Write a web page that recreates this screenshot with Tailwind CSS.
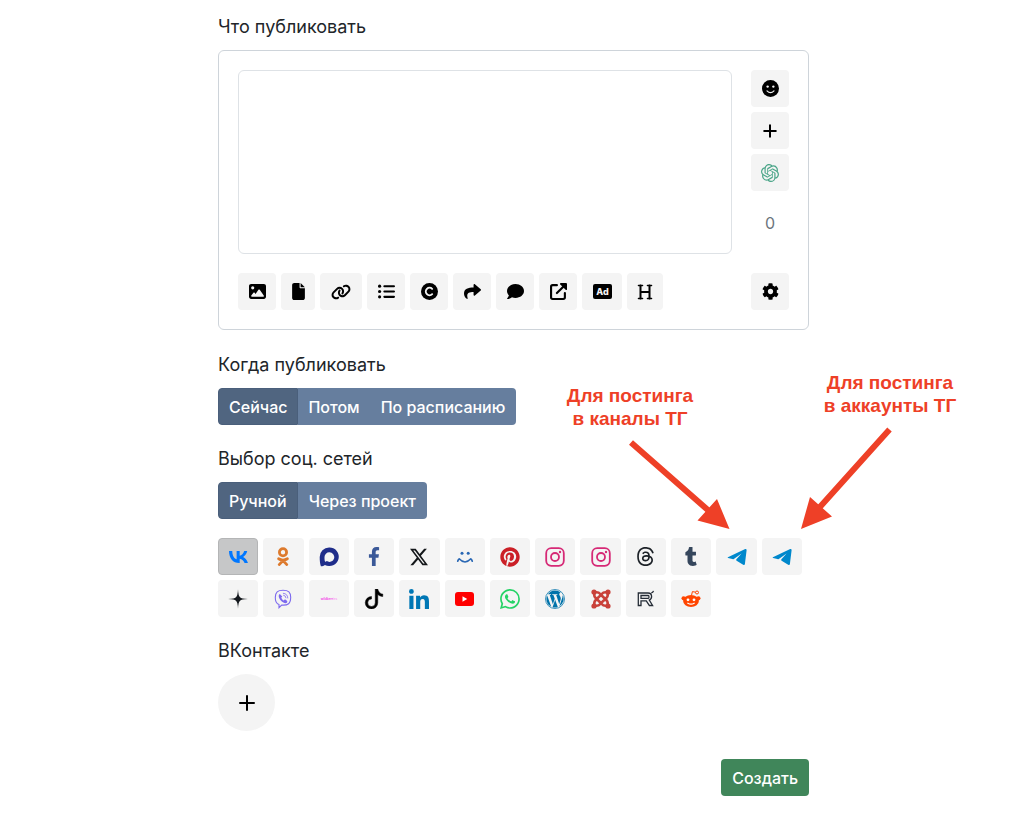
<!DOCTYPE html>
<html lang="ru">
<head>
    <meta charset="UTF-8">
    <meta name="viewport" content="width=device-width, initial-scale=1.0">
    <title>Новый пост</title>
    <script src="https://cdn.jsdelivr.net/npm/@tailwindcss/browser@4"></script>
</head>
<body class="bg-white font-['Inter',sans-serif] text-base text-[#212529]">
    <main class="relative mx-auto max-w-[594px] pt-[13px] pl-[3px]">
        <h2 class="text-lg leading-[27px] mb-[10px]"><label for="post-text">Что публиковать</label></h2>
        <section class="border border-[#ced4da] rounded-md p-[19px]">
            <div class="flex gap-[19px]">
                <textarea id="post-text" class="block flex-1 min-w-0 h-[184px] border border-[#dee2e6] rounded-md p-2 resize-none"></textarea>
                <div class="flex flex-col gap-[5px] w-[38px]">
                    <button aria-label="Эмодзи" class="flex items-center justify-center h-[37px] rounded bg-[#f4f4f4]">
                        <svg class="size-[17px]" viewBox="0 0 16 16"><circle cx="8" cy="8" r="8"/><circle cx="5.3" cy="6.2" r="1.1" fill="#f4f4f4"/><circle cx="10.7" cy="6.2" r="1.1" fill="#f4f4f4"/><path d="M4.7 10.2Q8 13.6 11.3 10.2" fill="none" stroke="#f4f4f4" stroke-width="1.1" stroke-linecap="round"/></svg>
                    </button>
                    <button aria-label="Добавить" class="flex items-center justify-center h-[37px] rounded bg-[#f4f4f4]">
                        <svg class="size-4" viewBox="0 0 16 16" fill="none" stroke="#000" stroke-width="2" stroke-linecap="round"><path d="M8 2.2v11.6M2.2 8h11.6"/></svg>
                    </button>
                    <button aria-label="ChatGPT" class="flex items-center justify-center h-[37px] rounded bg-[#f4f4f4]">
                        <svg class="size-[18px]" viewBox="0 0 24 24" fill="#4aa588"><path d="M22.2819 9.8211a5.9847 5.9847 0 0 0-.5157-4.9108 6.0462 6.0462 0 0 0-6.5098-2.9A6.0651 6.0651 0 0 0 4.9807 4.1818a5.9847 5.9847 0 0 0-3.9977 2.9 6.0462 6.0462 0 0 0 .7427 7.0966 5.98 5.98 0 0 0 .511 4.9107 6.051 6.051 0 0 0 6.5146 2.9001A5.9847 5.9847 0 0 0 13.2599 24a6.0557 6.0557 0 0 0 5.7718-4.2058 5.9894 5.9894 0 0 0 3.9977-2.9001 6.0557 6.0557 0 0 0-.7475-7.0729zm-9.022 12.6081a4.4755 4.4755 0 0 1-2.8764-1.0408l.1419-.0804 4.7783-2.7582a.7948.7948 0 0 0 .3927-.6813v-6.7369l2.02 1.1686a.071.071 0 0 1 .038.052v5.5826a4.504 4.504 0 0 1-4.4945 4.4944zm-9.6607-4.1254a4.4708 4.4708 0 0 1-.5346-3.0137l.142.0852 4.783 2.7582a.7712.7712 0 0 0 .7806 0l5.8428-3.3685v2.3324a.0804.0804 0 0 1-.0332.0615L9.74 19.9502a4.4992 4.4992 0 0 1-6.1408-1.6464zM2.3408 7.8956a4.485 4.485 0 0 1 2.3655-1.9728V11.6a.7664.7664 0 0 0 .3879.6765l5.8144 3.3543-2.0201 1.1685a.0757.0757 0 0 1-.071 0l-4.8303-2.7865A4.504 4.504 0 0 1 2.3408 7.872zm16.5963 3.8558L13.1038 8.364 15.1192 7.2a.0757.0757 0 0 1 .071 0l4.8303 2.7913a4.4944 4.4944 0 0 1-.6765 8.1042v-5.6772a.79.79 0 0 0-.407-.667zm2.0107-3.0231l-.142-.0852-4.7735-2.7818a.7759.7759 0 0 0-.7854 0L9.409 9.2297V6.8974a.0662.0662 0 0 1 .0284-.0615l4.8303-2.7866a4.4992 4.4992 0 0 1 6.6802 4.66zM8.3065 12.863l-2.02-1.1638a.0804.0804 0 0 1-.038-.0567V6.0742a4.4992 4.4992 0 0 1 7.3757-3.4537l-.142.0805L8.704 5.459a.7948.7948 0 0 0-.3927.6813zm1.0976-2.3654l2.602-1.4998 2.6069 1.4998v2.9994l-2.5974 1.4997-2.6067-1.4997Z"/></svg>
                    </button>
                    <span class="mt-[15px] text-center leading-6 text-[#6c757d]">0</span>
                </div>
            </div>
            <div class="mt-[19px] flex gap-[5px]">
                <button aria-label="Изображение" class="flex items-center justify-center w-[38px] h-[37px] rounded bg-[#f4f4f4]">
                    <svg class="size-[17px]" viewBox="0 0 512 512"><path d="M0 96C0 60.7 28.7 32 64 32H448c35.3 0 64 28.7 64 64V416c0 35.3-28.7 64-64 64H64c-35.3 0-64-28.7-64-64V96zM323.8 202.5c-4.5-6.6-11.9-10.5-19.8-10.5s-15.4 3.9-19.8 10.5l-87 127.6L170.7 297c-4.6-5.7-11.5-9-18.7-9s-14.2 3.3-18.7 9l-64 80c-5.8 7.2-6.9 17.1-2.9 25.4s12.4 13.6 21.6 13.6h96 32H424c8.9 0 17.1-4.9 21.2-12.8s3.6-17.4-1.4-24.7l-120-176zM112 192a48 48 0 1 0 0-96 48 48 0 1 0 0 96z"/></svg>
                </button>
                <button aria-label="Файл" class="flex items-center justify-center w-[34px] h-[37px] rounded bg-[#f4f4f4]">
                    <svg class="w-[13px] h-[17px]" viewBox="0 0 384 512"><path d="M0 64C0 28.7 28.7 0 64 0H224V128c0 17.7 14.3 32 32 32H384V448c0 35.3-28.7 64-64 64H64c-35.3 0-64-28.7-64-64V64zm384 64H256V0L384 128z"/></svg>
                </button>
                <button aria-label="Ссылка" class="flex items-center justify-center w-[42px] h-[37px] rounded bg-[#f4f4f4]">
                    <svg class="w-5 h-4" viewBox="0 0 640 512"><path d="M579.8 267.7c56.5-56.5 56.5-148 0-204.5c-50-50-128.8-56.5-186.3-15.4l-1.6 1.1c-14.4 10.3-17.7 30.3-7.4 44.6s30.3 17.7 44.6 7.4l1.6-1.1c32.1-22.9 76-19.3 103.8 8.6c31.5 31.5 31.5 82.5 0 114L422.3 334.8c-31.5 31.5-82.5 31.5-114 0c-27.9-27.9-31.5-71.8-8.6-103.8l1.1-1.6c10.3-14.4 6.9-34.4-7.4-44.6s-34.4-6.9-44.6 7.4l-1.1 1.6C206.5 251.2 213 330 263 380c56.5 56.5 148 56.5 204.5 0L579.8 267.7zM60.2 244.3c-56.5 56.5-56.5 148 0 204.5c50 50 128.8 56.5 186.3 15.4l1.6-1.1c14.4-10.3 17.7-30.3 7.4-44.6s-30.3-17.7-44.6-7.4l-1.6 1.1c-32.1 22.9-76 19.3-103.8-8.6C74 372 74 321 105.5 289.5L217.7 177.2c31.5-31.5 82.5-31.5 114 0c27.9 27.9 31.5 71.8 8.6 103.9l-1.1 1.6c-10.3 14.4-6.9 34.4 7.4 44.6s34.4 6.9 44.6-7.4l1.1-1.6C433.5 260.8 427 182 377 132c-56.5-56.5-148-56.5-204.5 0L60.2 244.3z"/></svg>
                </button>
                <button aria-label="Список" class="flex items-center justify-center w-[38px] h-[37px] rounded bg-[#f4f4f4]">
                    <svg class="size-[17px]" viewBox="0 0 16 16"><circle cx="1.5" cy="3" r="1.5"/><circle cx="1.5" cy="8" r="1.5"/><circle cx="1.5" cy="13" r="1.5"/><path d="M6 3h9M6 8h9M6 13h9" stroke="#000" stroke-width="2" stroke-linecap="round"/></svg>
                </button>
                <button aria-label="Копирайт" class="flex items-center justify-center w-[38px] h-[37px] rounded bg-[#f4f4f4]">
                    <svg class="size-[17px]" viewBox="0 0 16 16"><circle cx="8" cy="8" r="8"/><path d="M10.5 10.5a3.5 3.5 0 1 1 0-5" fill="none" stroke="#f4f4f4" stroke-width="1.8" stroke-linecap="round"/></svg>
                </button>
                <button aria-label="Репост" class="flex items-center justify-center w-[38px] h-[37px] rounded bg-[#f4f4f4]">
                    <svg class="size-[17px]" viewBox="0 0 512 512"><path d="M503.691 189.836L327.687 37.851C312.281 24.546 288 35.347 288 56.015v80.053C127.371 137.907 0 170.1 0 322.326c0 61.441 39.581 122.309 83.333 154.132 13.653 9.931 33.111-2.533 28.077-18.631C66.066 312.814 132.917 274.316 288 272.085V360c0 20.7 24.3 31.453 39.687 18.164l176.004-152c11.071-9.562 11.086-26.753 0-36.328z"/></svg>
                </button>
                <button aria-label="Комментарий" class="flex items-center justify-center w-[38px] h-[37px] rounded bg-[#f4f4f4]">
                    <svg class="size-[17px]" viewBox="0 0 512 512"><path d="M256 32C114.6 32 0 125.1 0 240c0 49.6 21.4 95 57 130.7C44.5 421.1 2.7 466 2.2 466.5c-2.2 2.3-2.8 5.7-1.5 8.7S4.8 480 8 480c66.3 0 116-31.8 140.6-51.4 32.7 12.3 69 19.4 107.4 19.4 141.4 0 256-93.1 256-208S397.4 32 256 32z"/></svg>
                </button>
                <button aria-label="Внешняя ссылка" class="flex items-center justify-center w-[38px] h-[37px] rounded bg-[#f4f4f4]">
                    <svg class="size-[17px]" viewBox="0 0 16 16"><path d="M6.5 2H2.5Q1 2 1 3.5V13.5Q1 15 2.5 15H12.5Q14 15 14 13.5V9.5" fill="none" stroke="#000" stroke-width="2" stroke-linecap="round"/><path d="M6.5 9.5 13 3" stroke="#000" stroke-width="2" stroke-linecap="round"/><path d="M10 0h5q1 0 1 1v5q-.5 1-1.3.3L9.7 1.3Q9 .5 10 0z"/></svg>
                </button>
                <button aria-label="Реклама" class="flex items-center justify-center w-[40px] h-[37px] rounded bg-[#f4f4f4]">
                    <svg class="w-[19px] h-[15px]" viewBox="0 0 19 15"><rect width="19" height="15" rx="2"/><text x="9.5" y="11" text-anchor="middle" font-family="Inter, sans-serif" font-weight="800" font-size="9" fill="#f4f4f4">Ad</text></svg>
                </button>
                <button aria-label="Заголовок" class="flex items-center justify-center w-[36px] h-[37px] rounded bg-[#f4f4f4]">
                    <svg class="size-4" viewBox="0 0 16 16" fill="none" stroke="#000" stroke-linecap="round"><path d="M1.5 1.5h4M10.5 1.5h4M1.5 14.5h4M10.5 14.5h4" stroke-width="1.6"/><path d="M3.5 1.5v13M12.5 1.5v13M3.5 8h9" stroke-width="2"/></svg>
                </button>
                <button aria-label="Настройки" class="ml-auto flex items-center justify-center w-[38px] h-[37px] rounded bg-[#f4f4f4]">
                    <svg class="size-[17px]" viewBox="0 0 512 512"><path d="M487.4 315.7l-42.6-24.6c4.3-23.2 4.3-47 0-70.2l42.6-24.6c4.9-2.8 7.1-8.6 5.5-14-11.1-35.6-30-67.8-54.7-94.6-3.8-4.1-10-5.1-14.8-2.3L380.8 110c-17.9-15.4-38.5-27.3-60.8-35.1V25.8c0-5.6-3.9-10.5-9.4-11.7-36.7-8.2-74.3-7.8-109.2 0-5.5 1.2-9.4 6.1-9.4 11.7V75c-22.2 7.9-42.8 19.8-60.8 35.1L88.7 85.5c-4.9-2.8-11-1.9-14.8 2.3-24.7 26.7-43.6 58.9-54.7 94.6-1.7 5.4.6 11.2 5.5 14L67.3 221c-4.3 23.2-4.3 47 0 70.2l-42.6 24.6c-4.9 2.8-7.1 8.6-5.5 14 11.1 35.6 30 67.8 54.7 94.6 3.8 4.1 10 5.1 14.8 2.3l42.6-24.6c17.9 15.4 38.5 27.3 60.8 35.1v49.2c0 5.6 3.9 10.5 9.4 11.7 36.7 8.2 74.3 7.8 109.2 0 5.5-1.2 9.4-6.1 9.4-11.7v-49.2c22.2-7.9 42.8-19.8 60.8-35.1l42.6 24.6c4.9 2.8 11 1.9 14.8-2.3 24.7-26.7 43.6-58.9 54.7-94.6 1.5-5.5-.7-11.3-5.6-14.1zM256 336c-44.1 0-80-35.9-80-80s35.9-80 80-80 80 35.9 80 80-35.9 80-80 80z"/></svg>
                </button>
            </div>
        </section>

        <h2 class="text-lg leading-[27px] mt-[21px] mb-[10px]">Когда публиковать</h2>
        <div class="flex font-medium text-white">
            <button aria-pressed="true" class="h-[37px] px-[10px] rounded-l border border-[#4a5f7b] bg-[#506580]">Сейчас</button>
            <button aria-pressed="false" class="h-[37px] px-[10px] bg-[#667e9e]">Потом</button>
            <button aria-pressed="false" class="h-[37px] px-[11px] rounded-r bg-[#667e9e]">По расписанию</button>
        </div>

        <h2 class="text-lg leading-[27px] mt-5 mb-[10px]">Выбор соц. сетей</h2>
        <div class="flex font-medium text-white">
            <button aria-pressed="true" class="h-[37px] px-[10px] rounded-l border border-[#4a5f7b] bg-[#506580]">Ручной</button>
            <button aria-pressed="false" class="h-[37px] px-[11px] rounded-r bg-[#667e9e]">Через проект</button>
        </div>

        <div class="mt-[19px] grid grid-cols-13 gap-[5px] max-w-[584px]">
            <button aria-label="ВКонтакте" aria-pressed="true" class="flex items-center justify-center h-[37px] rounded border border-[#b4b5b6] bg-[#c6c7c8]">
                <svg class="w-[19px] h-3" viewBox="4.05 7.3 16.06 9.99" preserveAspectRatio="none" fill="#0077ff"><path d="M12.77 17.29c-5.47 0-8.59-3.75-8.72-9.99h2.74c.09 4.58 2.11 6.52 3.71 6.92V7.3h2.58v3.95c1.58-.17 3.24-1.97 3.8-3.95h2.58c-.43 2.44-2.23 4.24-3.51 4.98 1.28.6 3.33 2.17 4.11 5.01h-2.84c-.61-1.9-2.13-3.37-4.14-3.57v3.57z"/></svg>
            </button>
            <button aria-label="Одноклассники" class="flex items-center justify-center h-[37px] rounded bg-[#f4f4f4]">
                <svg class="size-5" viewBox="0 0 20 20" fill="none" stroke="#dd7a2d" stroke-width="2.8" stroke-linecap="round"><circle cx="10" cy="5.2" r="3.6"/><path d="M5.6 11.8q4.4 2.8 8.8 0M10 13.6l-3.8 4M10 13.6l3.8 4"/></svg>
            </button>
            <button aria-label="MAX" class="flex items-center justify-center h-[37px] rounded bg-[#f4f4f4]">
                <svg class="size-5" viewBox="0 0 20 20"><path fill="#1f2d8a" fill-rule="evenodd" d="M10.2.5a9.3 9.3 0 1 1-4.3 17.4C5 18.7 3.5 19.3 1.9 19.3 1 17 .7 13 .7 10A9.4 9.4 0 0 1 10.2.5zM10.3 5.3a4.8 4.8 0 0 0-4.8 4.7c0 1.8 0 3.5.6 4.8.7 0 1.2-.3 1.7-.7a4.8 4.8 0 1 0 2.5-8.8z"/></svg>
            </button>
            <button aria-label="Facebook" class="flex items-center justify-center h-[37px] rounded bg-[#f4f4f4]">
                <svg class="w-3 h-[19px]" viewBox="0 0 320 512" fill="#3b5998"><path d="M279.14 288l14.22-92.66h-88.91v-60.13c0-25.35 12.42-50.06 52.24-50.06h40.42V6.26S260.43 0 225.36 0c-73.22 0-121.08 44.38-121.08 124.72v70.62H22.89V288h81.39v224h100.17V288z"/></svg>
            </button>
            <button aria-label="X" class="flex items-center justify-center h-[37px] rounded bg-[#f4f4f4]">
                <svg class="size-[18px]" viewBox="0 0 24 24" fill="#14171a"><path d="M18.901 1.153h3.68l-8.04 9.19L24 22.846h-7.406l-5.8-7.584-6.638 7.584H.474l8.6-9.83L0 1.154h7.594l5.243 6.932ZM17.61 20.644h2.039L6.486 3.24H4.298Z"/></svg>
            </button>
            <button aria-label="Мой Мир" class="flex items-center justify-center h-[37px] rounded bg-[#f4f4f4]">
                <svg class="size-5" viewBox="0 0 20 20"><circle cx="7" cy="6.3" r="1.5" fill="#2967b4"/><circle cx="13.2" cy="6.3" r="1.5" fill="#2967b4"/><path d="M2.7 14.2q.3-1.3 1.5-2.4 5.8 6.4 11.6 0 1.2 1.1 1.5 2.4" fill="none" stroke="#2967b4" stroke-width="1.6" stroke-linecap="round" stroke-linejoin="round"/></svg>
            </button>
            <button aria-label="Pinterest" class="flex items-center justify-center h-[37px] rounded bg-[#f4f4f4]">
                <svg class="size-5" viewBox="0 0 496 512" fill="#cb2027"><path d="M496 256c0 137-111 248-248 248-25.6 0-50.2-3.9-73.4-11.1 10.1-16.5 25.2-43.5 30.8-65 3-11.6 15.4-59 15.4-59 8.1 15.4 31.7 28.5 56.8 28.5 74.8 0 128.7-68.8 128.7-154.3 0-81.9-66.9-143.2-152.9-143.2-107 0-163.9 71.8-163.9 150.1 0 36.4 19.4 81.7 50.3 96.1 4.7 2.2 7.2 1.2 8.3-3.3.8-3.4 5-20.3 6.9-28.1.6-2.5.3-4.7-1.7-7.1-10.1-12.5-18.3-35.3-18.3-56.6 0-54.7 41.4-107.6 112-107.6 60.9 0 103.6 41.5 103.6 100.9 0 67.1-33.9 113.6-78 113.6-24.3 0-42.6-20.1-36.7-44.8 7-29.5 20.5-61.3 20.5-82.6 0-19-10.2-34.9-31.4-34.9-24.9 0-44.9 25.7-44.9 60.2 0 22 7.4 36.8 7.4 36.8s-24.5 103.8-29 123.2c-5 21.4-3 51.6-.9 71.2C65.4 450.9 0 361.1 0 256 0 119 111 8 248 8s248 111 248 248z"/></svg>
            </button>
            <button aria-label="Instagram" class="flex items-center justify-center h-[37px] rounded bg-[#f4f4f4]">
                <svg class="size-5" viewBox="0 0 20 20" fill="none" stroke="#d62976" stroke-width="1.8"><rect x="1.2" y="1.2" width="17.6" height="17.6" rx="5"/><circle cx="10" cy="10" r="4"/><circle cx="15" cy="5" r="1.2" fill="#d62976" stroke="none"/></svg>
            </button>
            <button aria-label="Instagram Business" class="flex items-center justify-center h-[37px] rounded bg-[#f4f4f4]">
                <svg class="size-5" viewBox="0 0 20 20" fill="none" stroke="#d62976" stroke-width="1.8"><rect x="1.2" y="1.2" width="17.6" height="17.6" rx="5"/><circle cx="10" cy="10" r="4"/><circle cx="15" cy="5" r="1.2" fill="#d62976" stroke="none"/></svg>
            </button>
            <button aria-label="Threads" class="flex items-center justify-center h-[37px] rounded bg-[#f4f4f4]">
                <svg class="size-[19px]" viewBox="0 0 16 16" fill="#1c2127"><path d="M6.321 6.016c-.27-.18-1.166-.802-1.166-.802.756-1.081 1.753-1.502 3.132-1.502.975 0 1.803.327 2.394.948s.928 1.509 1.005 2.644q.492.207.905.484c1.109.745 1.719 1.86 1.719 3.137 0 2.716-2.226 5.075-6.256 5.075C4.594 16 1 13.987 1 7.994 1 2.034 4.482 0 8.044 0 9.69 0 13.55.243 15 5.036l-1.36.353C12.516 1.974 10.163 1.43 8.006 1.43c-3.565 0-5.582 2.171-5.582 6.79 0 4.143 2.254 6.343 5.63 6.343 2.777 0 4.847-1.443 4.847-3.556 0-1.438-1.208-2.127-1.27-2.127-.236 1.234-.868 3.31-3.644 3.31-1.618 0-3.013-1.118-3.013-2.582 0-2.09 1.984-2.847 3.55-2.847.586 0 1.294.04 1.663.114 0-.637-.54-1.728-1.9-1.728-1.25 0-1.566.405-1.967.868ZM8.716 8.19c-2.04 0-2.304.87-2.304 1.416 0 .878 1.043 1.168 1.6 1.168 1.02 0 2.067-.282 2.232-2.423a6.2 6.2 0 0 0-1.528-.161"/></svg>
            </button>
            <button aria-label="Tumblr" class="flex items-center justify-center h-[37px] rounded bg-[#f4f4f4]">
                <svg class="w-3 h-[19px]" viewBox="0 0 320 512" fill="#35465c"><path d="M309.8 480.3c-13.6 14.5-50 31.7-97.4 31.7-120.8 0-147-88.8-147-140.6v-144H17.9c-5.5 0-10-4.5-10-10v-68c0-7.2 4.5-13.6 11.3-16 62-21.8 81.5-76 84.3-117.1.8-11 6.5-16.3 16.1-16.3h70.9c5.5 0 10 4.5 10 10v115.2h83c5.5 0 10 4.4 10 9.9v81.7c0 5.5-4.5 10-10 10h-83.4V360c0 34.2 23.7 53.6 68 35.8 4.8-1.9 9-3.2 12.7-2.2 3.5.9 5.8 3.4 7.4 7.9l22 64.3c1.8 5 3.3 10.6-.4 14.5z"/></svg>
            </button>
            <button aria-label="Telegram каналы" class="flex items-center justify-center h-[37px] rounded bg-[#f4f4f4]">
                <svg class="size-5" viewBox="0 0 20 20" fill="#0088cc"><path d="M.9 10.2 18.2 2.1q1.5-.3 1.4 1.1L17.9 17q-.3 1.7-1.7.8L9.6 13.7q-.9-.7-.2-1.5L14.6 6.5 6.8 12q-.7.4-1.5.1L1.1 11Q.2 10.6.9 10.2z"/></svg>
            </button>
            <button aria-label="Telegram аккаунты" class="flex items-center justify-center h-[37px] rounded bg-[#f4f4f4]">
                <svg class="size-5" viewBox="0 0 20 20" fill="#0088cc"><path d="M.9 10.2 18.2 2.1q1.5-.3 1.4 1.1L17.9 17q-.3 1.7-1.7.8L9.6 13.7q-.9-.7-.2-1.5L14.6 6.5 6.8 12q-.7.4-1.5.1L1.1 11Q.2 10.6.9 10.2z"/></svg>
            </button>
            <button aria-label="Дзен" class="flex items-center justify-center h-[37px] rounded bg-[#f4f4f4]">
                <svg class="size-5" viewBox="0 0 20 20" fill="#14181d"><path d="M10 .2q.3 6.8 2.1 8 1.2 1.5 7.8 1.8-6.6.3-7.8 1.8-1.8 1.2-2.1 8-.3-6.8-2.1-8Q6.7 10.3.1 10 6.7 9.700 7.900 8.200 9.700 7 10 .2z"/></svg>
            </button>
            <button aria-label="Viber" class="flex items-center justify-center h-[37px] rounded bg-[#f4f4f4]">
                <svg class="size-5" viewBox="0 0 20 20" fill="none" stroke="#7c69ee" stroke-linecap="round"><path d="M10 1.3c-5.5 0-7.5 1.8-7.7 7-.1 4.1.7 6.3 3.7 7.3v3.1l2.7-2.6c6.5.4 8.9-1.5 9-7.8C17.7 3.1 15.5 1.3 10 1.3z" stroke-width="1.1"/><path d="M6.8 4.9c-3 1.5.6 8 5.3 9.3 2.1.2 2.7-1.9 1.9-2.5l-2-1.4-1.3 1.1c-1.1-.5-2.2-1.8-2.4-2.9l1-1.1z" fill="#7c69ee" stroke="none"/><path d="M10.3 4.3q4.3.3 4.5 4.7M10.6 6.2q2.2.3 2.4 2.6" stroke-width=".8"/></svg>
            </button>
            <button aria-label="Wildberries" class="flex items-center justify-center h-[37px] rounded bg-[#f4f4f4]">
                <svg class="w-6 h-3" viewBox="0 0 24 12"><text x="12" y="7" text-anchor="middle" font-family="Inter, sans-serif" font-weight="700" font-size="3" fill="#f34fe8">wildberr<tspan fill="#f9a8f3">ies</tspan></text></svg>
            </button>
            <button aria-label="TikTok" class="flex items-center justify-center h-[37px] rounded bg-[#f4f4f4]">
                <svg class="size-5" viewBox="0 0 16 16" stroke="#000" stroke-width=".4"><path d="M9 0h1.98c.144.715.54 1.617 1.235 2.512C12.895 3.389 13.797 4 15 4v2c-1.753 0-3.07-.814-4-1.829V11a5 5 0 1 1-5-5v2a3 3 0 1 0 3 3z"/></svg>
            </button>
            <button aria-label="LinkedIn" class="flex items-center justify-center h-[37px] rounded bg-[#f4f4f4]">
                <svg class="size-5" viewBox="0 0 448 448" fill="#0077b5"><path d="M100.28 448H7.4V148.9h92.88zM53.79 108.1C24.09 108.1 0 83.5 0 53.8a53.79 53.79 0 0 1 107.58 0c0 29.7-24.1 54.3-53.79 54.3zM447.9 448h-92.68V302.4c0-34.7-.7-79.2-48.29-79.2-48.29 0-55.69 37.7-55.69 76.7V448h-92.78V148.9h89.08v40.8h1.3c12.4-23.5 42.69-48.3 87.88-48.3 94 0 111.28 61.9 111.28 142.3V448z"/></svg>
            </button>
            <button aria-label="YouTube" class="flex items-center justify-center h-[37px] rounded bg-[#f4f4f4]">
                <svg class="w-[19px] h-[14px]" viewBox="0 0 19 14"><rect width="19" height="14" rx="3" fill="#f00"/><path d="M7.5 4.2 12.2 7 7.5 9.8z" fill="#fff"/></svg>
            </button>
            <button aria-label="WhatsApp" class="flex items-center justify-center h-[37px] rounded bg-[#f4f4f4]">
                <svg class="size-5" viewBox="0 0 16 16" fill="#25d366"><path d="M13.601 2.326A7.85 7.85 0 0 0 7.994 0C3.627 0 .068 3.558.064 7.926c0 1.399.366 2.76 1.057 3.965L0 16l4.204-1.102a7.9 7.9 0 0 0 3.79.965h.004c4.368 0 7.926-3.558 7.93-7.93A7.9 7.9 0 0 0 13.6 2.326zM7.994 14.521a6.6 6.6 0 0 1-3.356-.92l-.24-.144-2.494.654.666-2.433-.156-.251a6.56 6.56 0 0 1-1.007-3.505c0-3.626 2.957-6.584 6.591-6.584a6.56 6.56 0 0 1 4.66 1.931 6.56 6.56 0 0 1 1.928 4.66c-.004 3.639-2.961 6.592-6.592 6.592m3.615-4.934c-.197-.099-1.17-.578-1.353-.646-.182-.065-.315-.099-.445.099-.133.197-.513.646-.627.775-.114.133-.232.148-.43.05-.197-.1-.836-.308-1.592-.985-.59-.525-.985-1.175-1.103-1.372-.114-.198-.011-.304.088-.403.087-.088.197-.232.296-.346.1-.114.133-.198.198-.33.065-.134.034-.248-.015-.347-.05-.099-.445-1.076-.612-1.47-.16-.389-.323-.335-.445-.34-.114-.007-.247-.007-.38-.007a.73.73 0 0 0-.529.247c-.182.198-.691.677-.691 1.654s.71 1.916.81 2.049c.098.133 1.394 2.132 3.383 2.992.47.205.84.326 1.129.418.475.152.904.129 1.246.08.38-.058 1.171-.48 1.338-.943.164-.464.164-.86.114-.943-.049-.084-.182-.133-.38-.232"/></svg>
            </button>
            <button aria-label="WordPress" class="flex items-center justify-center h-[37px] rounded bg-[#f4f4f4]">
                <svg class="size-5" viewBox="0 0 16 16" fill="#0073aa"><path d="M12.633 7.653c0-.848-.305-1.435-.566-1.892l-.08-.13c-.317-.51-.594-.958-.594-1.48 0-.63.478-1.218 1.152-1.218q.03 0 .058.003l.031.003A6.84 6.84 0 0 0 8 1.137 6.86 6.86 0 0 0 2.266 4.23c.16.005.313.009.442.009.717 0 1.828-.087 1.828-.087.37-.022.414.521.044.565 0 0-.371.044-.785.065l2.5 7.434 1.5-4.506-1.07-2.929c-.369-.022-.719-.065-.719-.065-.37-.022-.326-.588.043-.566 0 0 1.134.087 1.808.087.718 0 1.83-.087 1.83-.087.37-.022.413.522.043.566 0 0-.372.043-.785.065l2.48 7.377.684-2.287.054-.173c.27-.86.469-1.495.469-2.046zM1.137 8a6.86 6.86 0 0 0 3.868 6.176L1.73 5.206A6.8 6.8 0 0 0 1.137 8"/><path d="M6.061 14.583 8.121 8.6l2.109 5.78q.02.05.049.094a6.85 6.85 0 0 1-4.218.109m7.96-9.876q.046.328.047.706c0 .696-.13 1.479-.522 2.458l-2.096 6.06a6.86 6.86 0 0 0 2.572-9.224z"/><circle cx="8" cy="8" r="7.6" fill="none" stroke="#0073aa" stroke-width=".6"/></svg>
            </button>
            <button aria-label="Joomla" class="flex items-center justify-center h-[37px] rounded bg-[#f4f4f4]">
                <svg class="size-5" viewBox="0 0 20 20" fill="none" stroke="#c9413a" stroke-width="2.6"><g fill="#c9413a" stroke="none"><circle cx="3" cy="3" r="2.6"/><circle cx="17" cy="3" r="2.6"/><circle cx="3" cy="17" r="2.6"/><circle cx="17" cy="17" r="2.6"/></g><path d="M3.4 4Q2.7 7.3 5 9.3l3.3 3.2M16 3.4q-3.3-.7-5.3 1.6L7.5 8.3M16.6 16q.7-3.3-1.6-5.3l-3.3-3.2M4 16.6q3.3.7 5.3-1.6l3.2-3.3M4 3.4q3.3-.7 5.3 1.6l2.4 2.5M16.6 4q.7 3.3-1.6 5.3l-2.5 2.4M16 16.6q-3.3.7-5.3-1.6l-2.4-2.5M3.4 16q-.7-3.3 1.6-5.3l2.5-2.4"/></svg>
            </button>
            <button aria-label="Rutube" class="flex items-center justify-center h-[37px] rounded bg-[#f4f4f4]">
                <svg class="size-5" viewBox="0 0 20 20" fill="none" stroke="#252c36" stroke-width="1.3"><path d="M2.3 16.5V4h9.7q3.6 0 3.6 3.6 0 2.6-2.3 3.4l3.3 5.5h-3.2L10.3 11.8H5v4.7zM5 6.5v2.8h7.2q.8 0 .8-1.4t-.8-1.4z"/><path d="M15.2 3.8q1.8.1 2.3-1.9"/></svg>
            </button>
            <button aria-label="Reddit" class="flex items-center justify-center h-[37px] rounded bg-[#f4f4f4]">
                <svg class="size-5" viewBox="0 0 20 20"><g fill="#ff4500"><ellipse cx="10" cy="12" rx="7.9" ry="6"/><circle cx="2.6" cy="9.3" r="2.1"/><circle cx="17.4" cy="9.3" r="2.1"/></g><path d="M10.5 6.5 11.4 2.6 14.5 3.2" fill="none" stroke="#ff4500" stroke-width="1"/><circle cx="16" cy="3.5" r="1.5" fill="none" stroke="#ff4500"/><circle cx="7" cy="10.8" r="1.4" fill="#fff"/><circle cx="13" cy="10.8" r="1.4" fill="#fff"/><path d="M6.8 14.2q3.2 2 6.4 0" fill="none" stroke="#fff" stroke-width="1.2" stroke-linecap="round"/></svg>
            </button>
        </div>

        <h2 class="text-lg leading-[27px] mt-5 mb-[10px]">ВКонтакте</h2>
        <button aria-label="Добавить аккаунт" class="flex items-center justify-center size-[57px] rounded-full bg-[#f4f4f4]">
            <svg class="size-4" viewBox="0 0 16 16" fill="none" stroke="#000" stroke-width="2" stroke-linecap="round"><path d="M8 1v14M1 8h14"/></svg>
        </button>
        <div class="mt-7 flex justify-end">
            <button class="h-[37px] px-[11px] rounded bg-[#40865a] font-medium text-white">Создать</button>
        </div>

        <!-- Подсказки со стрелками -->
        <p class="absolute top-[384px] left-[335px] w-[160px] text-center font-['Liberation_Sans',sans-serif] font-bold text-[19px] leading-[23px] text-[#ee4027]">Для постинга<br>в каналы ТГ</p>
        <p class="absolute top-[371px] left-[595px] w-[160px] text-center font-['Liberation_Sans',sans-serif] font-bold text-[19px] leading-[23px] text-[#ee4027]">Для постинга<br>в аккаунты ТГ</p>
        <svg class="absolute top-[425px] left-[411px] w-[269px] h-[106px] pointer-events-none" viewBox="626 425 269 106" fill="#ee4027" stroke="#ee4027">
            <path d="M631 442.5 709 511M889.5 429.5 819 508" stroke-width="6"/>
            <path d="M729.5 529 717 499 697.5 520.5zM801 529 810 497 832 516.5z" stroke="none"/>
        </svg>
    </main>
</body>
</html>
